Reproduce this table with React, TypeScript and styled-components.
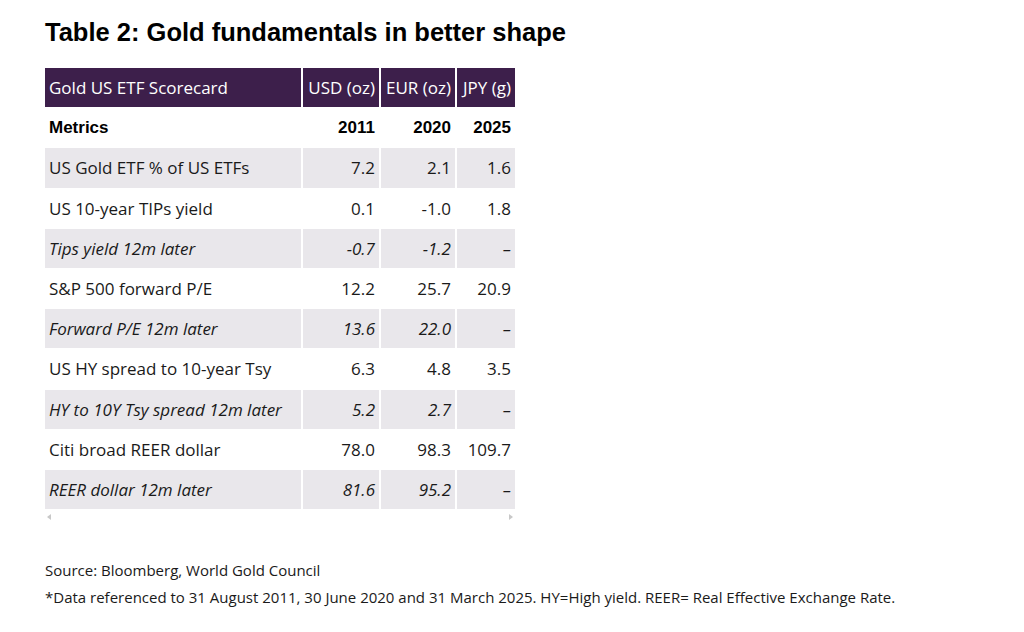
import { FC } from "react";
import styled, { createGlobalStyle } from "styled-components";

const GlobalStyle = createGlobalStyle`
  body {
    margin: 0;
    background: #ffffff;
    font-family: "Open Sans", "Liberation Sans", sans-serif;
    color: #1a1a1a;
  }
`

const Page = styled.div`
  padding: 17px 0 0 45px;
  width: 1024px;
  height: 632px;
  box-sizing: border-box;
`

const Title = styled.h2`
  margin: 0 0 20px;
  font-family: "Liberation Sans", Arial, sans-serif;
  font-size: 25.5px;
  font-weight: bold;
  color: #000;
  line-height: 30px;
`

const ScrollBox = styled.div`
  display: inline-block;
  margin-left: -2px;
`

const Table = styled.table`
  border-collapse: separate;
  border-spacing: 2px 1px;
  font-size: 17px;
  table-layout: fixed;
  width: 474px;
`

const HeadCell = styled.th<{ $w: number; $left?: boolean }>`
  width: ${(p) => p.$w}px;
  height: 39.2px;
  box-sizing: border-box;
  padding: 0 4px;
  background: #3d1f4b;
  color: #ffffff;
  font-weight: normal;
  text-align: ${(p) => (p.$left ? "left" : "right")};
  white-space: nowrap;
`

const SubCell = styled.td<{ $left?: boolean }>`
  height: 39.2px;
  padding: 0 4px;
  font-family: "Liberation Sans", Arial, sans-serif;
  font-weight: bold;
  color: #000;
  text-align: ${(p) => (p.$left ? "left" : "right")};
`

const Cell = styled.td<{ $left?: boolean; $shade: boolean; $italic: boolean }>`
  height: 39.2px;
  padding: 0 4px;
  background: ${(p) => (p.$shade ? "#e9e7eb" : "transparent")};
  font-style: ${(p) => (p.$italic ? "italic" : "normal")};
  text-align: ${(p) => (p.$left ? "left" : "right")};
  white-space: nowrap;
`

const Arrows = styled.div`
  display: flex;
  justify-content: space-between;
  padding: 2px 4px 0 4px;
  height: 12px;
`

const Arrow = styled.span<{ $dir: "left" | "right" }>`
  width: 0;
  height: 0;
  border-top: 3px solid transparent;
  border-bottom: 3px solid transparent;
  ${(p) =>
    p.$dir === "left"
      ? "border-right: 4px solid #c8c8c8;"
      : "border-left: 4px solid #c8c8c8;"}
  margin-top: 2px;
`

const Notes = styled.div`
  margin-top: 32px;
  font-size: 15px;
  line-height: 27px;
  color: #1a1a1a;
`

type Row = { label: string; values: string[]; italic?: boolean }

const ROWS: Row[] = [
  { label: "US Gold ETF % of US ETFs", values: ["7.2", "2.1", "1.6"] },
  { label: "US 10-year TIPs yield", values: ["0.1", "-1.0", "1.8"] },
  { label: "Tips yield 12m later", values: ["-0.7", "-1.2", "–"], italic: true },
  { label: "S&P 500 forward P/E", values: ["12.2", "25.7", "20.9"] },
  { label: "Forward P/E 12m later", values: ["13.6", "22.0", "–"], italic: true },
  { label: "US HY spread to 10-year Tsy", values: ["6.3", "4.8", "3.5"] },
  { label: "HY to 10Y Tsy spread 12m later", values: ["5.2", "2.7", "–"], italic: true },
  { label: "Citi broad REER dollar", values: ["78.0", "98.3", "109.7"] },
  { label: "REER dollar 12m later", values: ["81.6", "95.2", "–"], italic: true },
]

const App: FC = () => {
  return (
    <Page>
      <GlobalStyle />
      <Title>Table 2: Gold fundamentals in better shape</Title>
      <ScrollBox>
        <Table>
          <thead>
            <tr>
              <HeadCell $w={256} $left>Gold US ETF Scorecard</HeadCell>
              <HeadCell $w={76}>USD (oz)</HeadCell>
              <HeadCell $w={74}>EUR (oz)</HeadCell>
              <HeadCell $w={58}>JPY (g)</HeadCell>
            </tr>
          </thead>
          <tbody>
            <tr>
              <SubCell $left>Metrics</SubCell>
              <SubCell>2011</SubCell>
              <SubCell>2020</SubCell>
              <SubCell>2025</SubCell>
            </tr>
            {ROWS.map((row, i) => (
              <tr key={row.label}>
                <Cell $left $shade={i % 2 === 0} $italic={!!row.italic}>
                  {row.label}
                </Cell>
                {row.values.map((v, j) => (
                  <Cell key={j} $shade={i % 2 === 0} $italic={!!row.italic}>
                    {v}
                  </Cell>
                ))}
              </tr>
            ))}
          </tbody>
        </Table>
        <Arrows>
          <Arrow $dir="left" />
          <Arrow $dir="right" />
        </Arrows>
      </ScrollBox>
      <Notes>
        <div>Source: Bloomberg, World Gold Council</div>
        <div>
          *Data referenced to 31 August 2011, 30 June 2020 and 31 March 2025. HY=High yield. REER= Real Effective Exchange Rate.
        </div>
      </Notes>
    </Page>
  )
}

export default App
